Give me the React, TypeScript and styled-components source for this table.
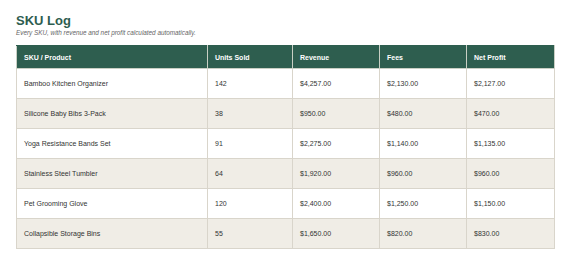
import styled, { createGlobalStyle } from "styled-components";

const GlobalStyle = createGlobalStyle`
  html, body {
    margin: 0;
    padding: 0;
    background: #ffffff;
    font-family: "Liberation Sans", Arial, sans-serif;
  }
`;

const Page = styled.div`
  padding: 13px 16px 16px 16px;
`;

const Title = styled.h1`
  margin: 0;
  font-size: 13px;
  line-height: 15px;
  font-weight: 700;
  color: #2e5d4f;
`;

const Subtitle = styled.p`
  margin: 1px 0 0 0;
  font-size: 6.35px;
  line-height: 8px;
  font-style: italic;
  color: #666666;
`;

const Table = styled.table`
  margin-top: 8px;
  width: 538px;
  border-collapse: collapse;
  table-layout: fixed;
  font-size: 7px;
`;

const HeadCell = styled.th`
  height: 22px;
  padding: 0 7px;
  text-align: left;
  font-weight: 700;
  color: #ffffff;
  background: #2e5e4f;
  border: 1px solid #c9cfc4;
  border-top-color: #2e5e4f;
`;

const Row = styled.tr<{ $alt: boolean }>`
  background: ${(p) => (p.$alt ? "#f0ede6" : "#ffffff")};
`;

const Cell = styled.td`
  height: 29px;
  padding: 0 7px;
  color: #333333;
  border: 1px solid #d9d5cb;
`;

const columns = [
  { label: "SKU / Product", width: 191 },
  { label: "Units Sold", width: 85 },
  { label: "Revenue", width: 87 },
  { label: "Fees", width: 87 },
  { label: "Net Profit", width: 88 },
];

const rows = [
  ["Bamboo Kitchen Organizer", "142", "$4,257.00", "$2,130.00", "$2,127.00"],
  ["Silicone Baby Bibs 3-Pack", "38", "$950.00", "$480.00", "$470.00"],
  ["Yoga Resistance Bands Set", "91", "$2,275.00", "$1,140.00", "$1,135.00"],
  ["Stainless Steel Tumbler", "64", "$1,920.00", "$960.00", "$960.00"],
  ["Pet Grooming Glove", "120", "$2,400.00", "$1,250.00", "$1,150.00"],
  ["Collapsible Storage Bins", "55", "$1,650.00", "$820.00", "$830.00"],
];

export default function App() {
  return (
    <Page>
      <GlobalStyle />
      <Title>SKU Log</Title>
      <Subtitle>Every SKU, with revenue and net profit calculated automatically.</Subtitle>
      <Table>
        <colgroup>
          {columns.map((c) => (
            <col key={c.label} style={{ width: c.width }} />
          ))}
        </colgroup>
        <thead>
          <tr>
            {columns.map((c) => (
              <HeadCell key={c.label}>{c.label}</HeadCell>
            ))}
          </tr>
        </thead>
        <tbody>
          {rows.map((r, i) => (
            <Row key={r[0]} $alt={i % 2 === 1}>
              {r.map((v, j) => (
                <Cell key={j}>{v}</Cell>
              ))}
            </Row>
          ))}
        </tbody>
      </Table>
    </Page>
  );
}
